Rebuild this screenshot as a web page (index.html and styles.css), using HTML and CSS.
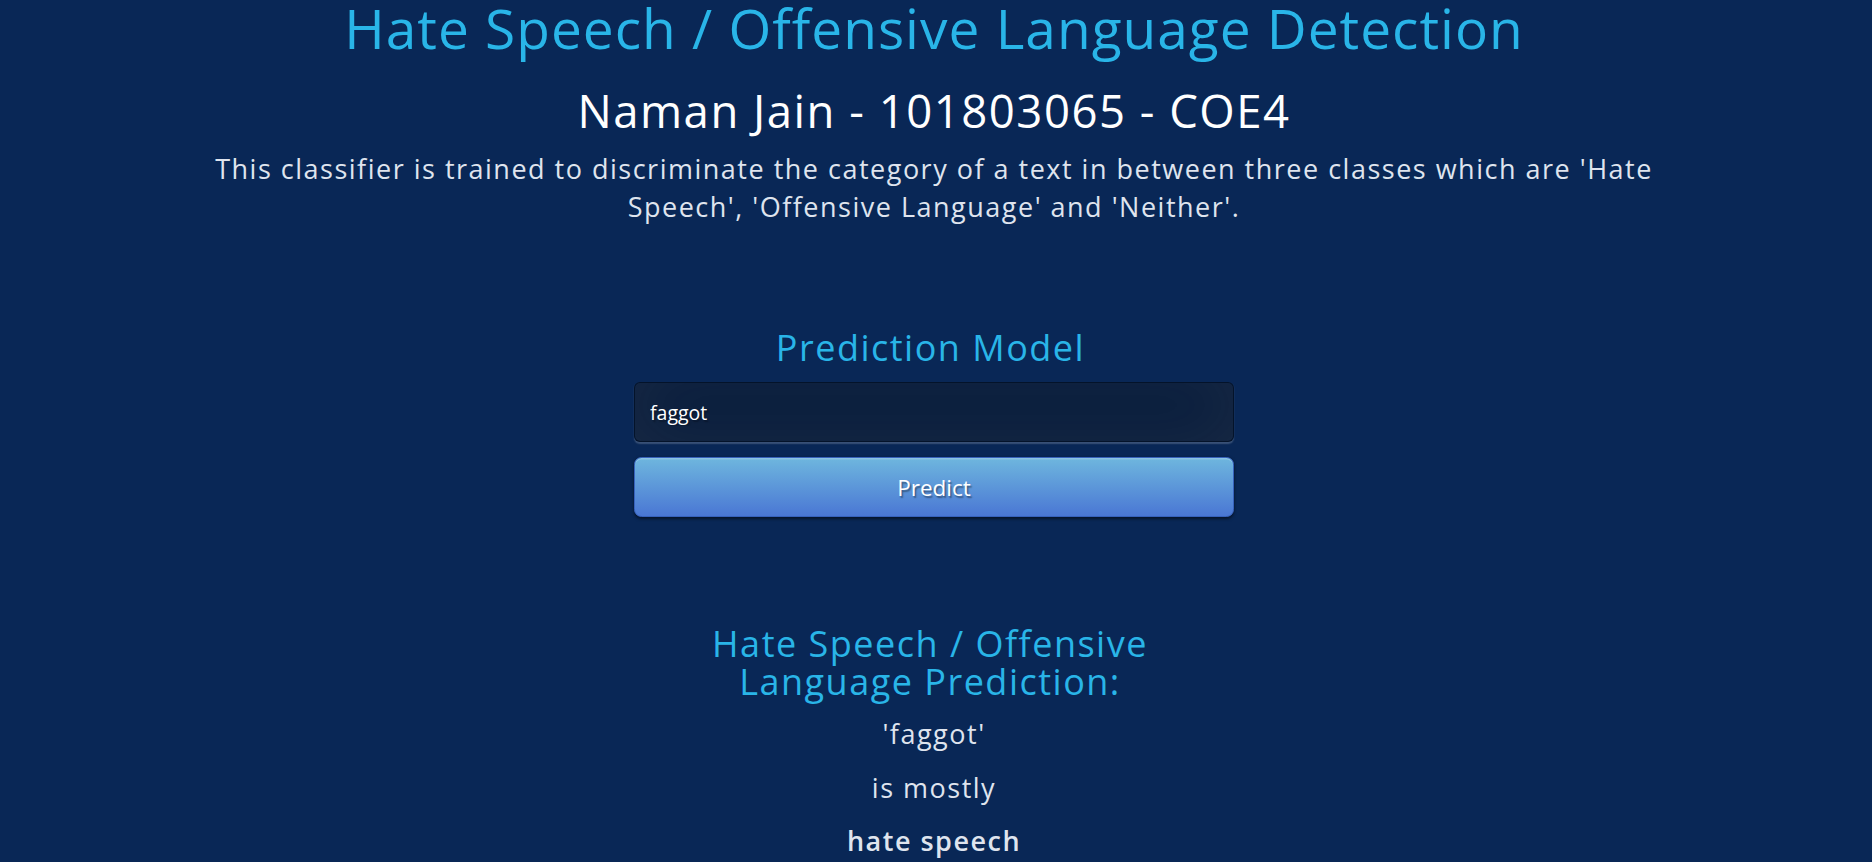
FILE: index.html
```html
<!DOCTYPE html>
<html lang="en">
<head>
<meta charset="utf-8">
<title>Hate Speech / Offensive Language Detection</title>
<link rel="stylesheet" href="styles.css">
</head>
<body>
<main class="page">
  <h1 class="title">Hate Speech / Offensive Language Detection</h1>
  <h2 class="author">Naman Jain - 101803065 - COE4</h2>
  <p class="desc">This classifier is trained to discriminate the category of a text in between three classes which are 'Hate Speech', 'Offensive Language' and 'Neither'.</p>
  <section class="model">
    <h3 class="model-title">Prediction Model</h3>
    <form class="form">
      <input class="text-input" type="text" value="faggot">
      <button class="btn" type="button">Predict</button>
    </form>
  </section>
  <section class="result">
    <h3 class="result-title">Hate Speech / Offensive Language Prediction:</h3>
    <p class="result-line">'faggot'</p>
    <p class="result-line">is mostly</p>
    <p class="result-line result-strong">hate speech</p>
  </section>
</main>
</body>
</html>
```
FILE: styles.css
```css
html, body {
  margin: 0;
  padding: 0;
  height: 100%;
  background: #092756;
  overflow: hidden;
}
body {
  padding-right: 4px;
  font-family: "Open Sans", "Noto Sans", sans-serif;
  color: #fff;
  letter-spacing: 1.5px;
  text-align: center;
}
.page {
  display: flex;
  flex-direction: column;
  align-items: center;
}
.title {
  margin: 0;
  padding-top: 2px;
  font-size: 55px;
  font-weight: 400;
  line-height: 52px;
  letter-spacing: 1px;
  color: #29b5e8;
}
.author {
  margin: 26px 0 0;
  font-size: 45.5px;
  font-weight: 400;
  line-height: 60px;
  color: #ffffff;
}
.desc {
  margin: 9.5px 0 0;
  max-width: 1470px;
  font-size: 27px;
  line-height: 38px;
  color: #dfe4ee;
}
.model {
  margin-top: 97px;
  width: 600px;
  display: flex;
  flex-direction: column;
}
.model-title {
  margin: 0;
  padding-right: 7px;
  font-size: 36px;
  font-weight: 400;
  line-height: 49px;
  color: #29b5e8;
}
.form {
  margin-top: 10.5px;
  display: flex;
  flex-direction: column;
  gap: 15px;
}
.text-input {
  box-sizing: border-box;
  width: 100%;
  height: 60px;
  margin: 0;
  padding: 0 15px;
  font-family: "Open Sans", "Noto Sans", sans-serif;
  font-size: 19.5px;
  color: #fff;
  text-shadow: 1.5px 1.5px 1.5px rgba(0,0,0,0.3);
  background: rgba(0,0,0,0.3);
  border: 1.5px solid rgba(0,0,0,0.3);
  border-radius: 6px;
  box-shadow: inset 0 -7px 67px rgba(100,100,100,0.2), 0 1.5px 1.5px rgba(255,255,255,0.2);
  outline: none;
}
.btn {
  box-sizing: border-box;
  width: 100%;
  height: 60px;
  margin: 0;
  padding: 0 21px;
  font-family: "Open Sans", "Noto Sans", sans-serif;
  font-size: 22.5px;
  color: #fff;
  text-shadow: 1.5px 1.5px 1.5px rgba(0,0,0,0.4);
  background-color: #4a77d4;
  background-image: linear-gradient(to bottom, #6eb6de, #4a77d4);
  border: 1.5px solid #3762bc;
  border-radius: 7.5px;
  box-shadow: inset 0 1.5px 0 rgba(255,255,255,0.2), 0 1.5px 3px rgba(0,0,0,0.5);
  cursor: pointer;
}
.result {
  margin-top: 108px;
  display: flex;
  flex-direction: column;
  align-items: center;
}
.result-title {
  margin: 0;
  max-width: 480px;
  padding-right: 8px;
  font-size: 36px;
  font-weight: 400;
  line-height: 38px;
  color: #29b5e8;
}
.result-line {
  margin: 15.5px 0 0;
  font-size: 27px;
  line-height: 38px;
  color: #dfe4ee;
}
.result-title + .result-line {
  margin-top: 14px;
}
.result-strong {
  font-weight: 600;
}
```
